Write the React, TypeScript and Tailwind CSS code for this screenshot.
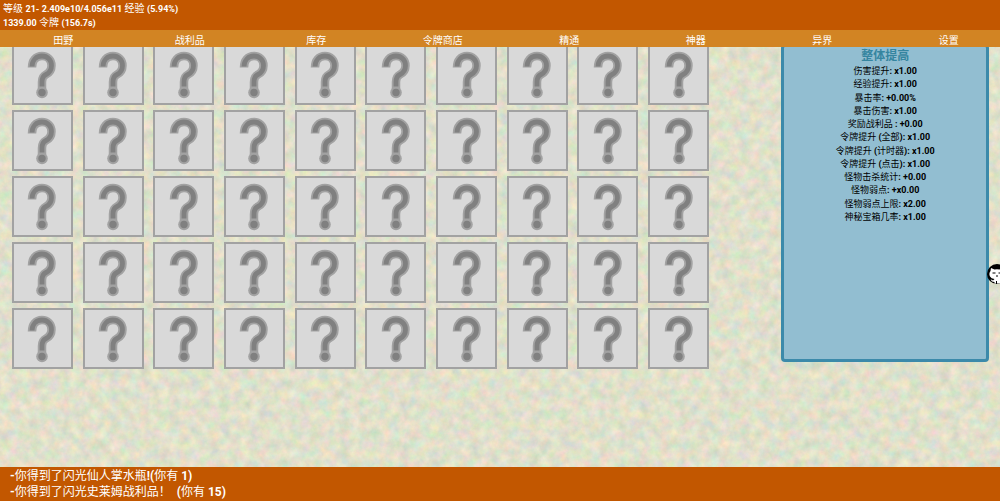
import React from "react";

const tabs = ["田野", "战利品", "库存", "令牌商店", "精通", "神器", "异界", "设置"];

const boosts = [
  ["伤害提升:", "x1.00"],
  ["经验提升:", "x1.00"],
  ["暴击率:", "+0.00%"],
  ["暴击伤害:", "x1.00"],
  ["奖励战利品 :", "+0.00"],
  ["令牌提升 (全部):", "x1.00"],
  ["令牌提升 (计时器):", "x1.00"],
  ["令牌提升 (点击):", "x1.00"],
  ["怪物击杀统计:", "+0.00"],
  ["怪物弱点:", "+x0.00"],
  ["怪物弱点上限:", "x2.00"],
  ["神秘宝箱几率:", "x1.00"],
];

const slots = Array.from({ length: 50 }, (_, i) => i);

/** Sets Latin letters, digits and punctuation heavier than the Chinese text. */
function Mixed({ children, latin = "" }: { children: string; latin?: string }) {
  const parts = children.split(/([\x21-\x7e]+)/);
  return (
    <>
      {parts.map((part, i) =>
        i % 2 === 1 ? (
          <span key={i} className={`font-bold ${latin}`}>{part}</span>
        ) : (
          part
        ),
      )}
    </>
  );
}

function Paper() {
  return (
    <svg aria-hidden="true" className="absolute inset-0 -z-10 h-full w-full">
      <filter id="paper" x="0" y="0" width="100%" height="100%" colorInterpolationFilters="sRGB">
        <feTurbulence type="fractalNoise" baseFrequency="0.1" numOctaves="5" seed="8" />
        <feColorMatrix
          values="0.25 0 0 0 0.755
                  0 0.15 0 0 0.805
                  0 0 0.17 0 0.71
                  0 0 0 0 1"
        />
      </filter>
      <rect width="100%" height="100%" filter="url(#paper)" />
    </svg>
  );
}

function QuestionMark() {
  return (
    <svg viewBox="0 0 30 48" className="h-12 w-[30px]" fill="none" aria-hidden="true">
      <path
        d="M5 16.500C5 9.500 9 5 15 5C20.500 5 24.500 9 24.500 14.500C24.500 19.500 22 22 19 23.500C16 25 15 27 15 31V38"
        stroke="#a2a2a2"
        strokeWidth="8.500"
      />
      <circle cx="15" cy="41.500" r="5.800" fill="#a2a2a2" />
      <path
        d="M5 15.500C5.200 9.500 9 5 15 5C20.500 5 24.500 9 24.500 14.500C24.500 19.500 22 22 19 23.500C16 25 15 27 15 31V35.500"
        stroke="#808080"
        strokeWidth="4.800"
      />
      <circle cx="15" cy="41.500" r="3.700" fill="#808080" />
    </svg>
  );
}

function Octocat() {
  return (
    <svg viewBox="0 0 20 20" className="size-5 shrink-0" aria-hidden="true">
      <circle cx="10" cy="10" r="10" fill="#000" />
      <path
        d="M4 4L7.500 5.500Q10 5 12.500 5.500L16 4L16.500 7Q18.500 9.500 17 12.500Q16 14.500 13 15V19.500H7.500V18Q4.500 18 3.500 15.500Q5 15.500 6 16.500L7.500 15Q4 14.500 3 12.500Q1.500 9.500 3.500 7Z"
        fill="#fff"
      />
      <path d="M5.500 9h3M11.500 9h3M9 12h2M9.500 17v3" stroke="#000" />
    </svg>
  );
}

export default function App() {
  return (
    <div className="relative isolate flex h-screen flex-col overflow-hidden bg-[#e0dfc9] font-['Roboto','Noto_Sans_CJK_SC',sans-serif] text-black">
      <Paper />
      <header className="z-10 text-white">
        <div className="h-[30px] bg-[#c25700] px-[3px] pt-0.5 text-[10px] leading-[14px]">
          <p><Mixed latin="text-[9px]">等级 21- 2.409e10/4.056e11 经验 (5.94%)</Mixed></p>
          <p><Mixed latin="text-[9px]">1339.00 令牌 (156.7s)</Mixed></p>
        </div>
        <nav className="-mr-3 grid h-[17px] grid-cols-8 bg-[#d28423]">
          {tabs.map((tab) => (
            <button key={tab} type="button" className="pt-1 text-[10px] leading-[13px]">
              {tab}
            </button>
          ))}
        </nav>
      </header>

      <main className="-mt-[3px] flex min-h-0 flex-1 items-start justify-between pr-[11px]">
        <div className="grid w-[73%] grid-cols-10 justify-items-center gap-y-[5px] pr-2 pl-[7px]">
          {slots.map((slot) => (
            <button
              key={slot}
              type="button"
              aria-label={`${slot + 1}`}
              className="flex size-[61px] items-center justify-center border-2 border-[#a2a2a2] bg-[#d9d9d9]"
            >
              <QuestionMark />
            </button>
          ))}
        </div>
        <aside className="h-[318px] w-[21%] rounded-sm border-3 border-[#3c8aaa] bg-[#92bed1] pt-px text-center">
          <h2 className="text-[12px] leading-[17px] font-bold text-[#3585a0]">整体提高</h2>
          <ul className="flex h-[159px] flex-col justify-between text-[9px] leading-[13px]">
            {boosts.map(([label, value]) => (
              <li key={label}><Mixed>{`${label} ${value}`}</Mixed></li>
            ))}
          </ul>
        </aside>
      </main>

      <a href="#github" aria-label="GitHub" className="absolute top-[264px] right-0 flex w-[13px] overflow-hidden">
        <Octocat />
      </a>

      <footer className="z-10 h-[34px] bg-[#c25700] px-2.5 pt-px text-[12px] leading-4 text-white">
        <p><Mixed>-你得到了闪光仙人掌水瓶!(你有 1)</Mixed></p>
        <p><Mixed>{"-你得到了闪光史莱姆战利品！\u00a0 (你有 15)"}</Mixed></p>
      </footer>
    </div>
  );
}
